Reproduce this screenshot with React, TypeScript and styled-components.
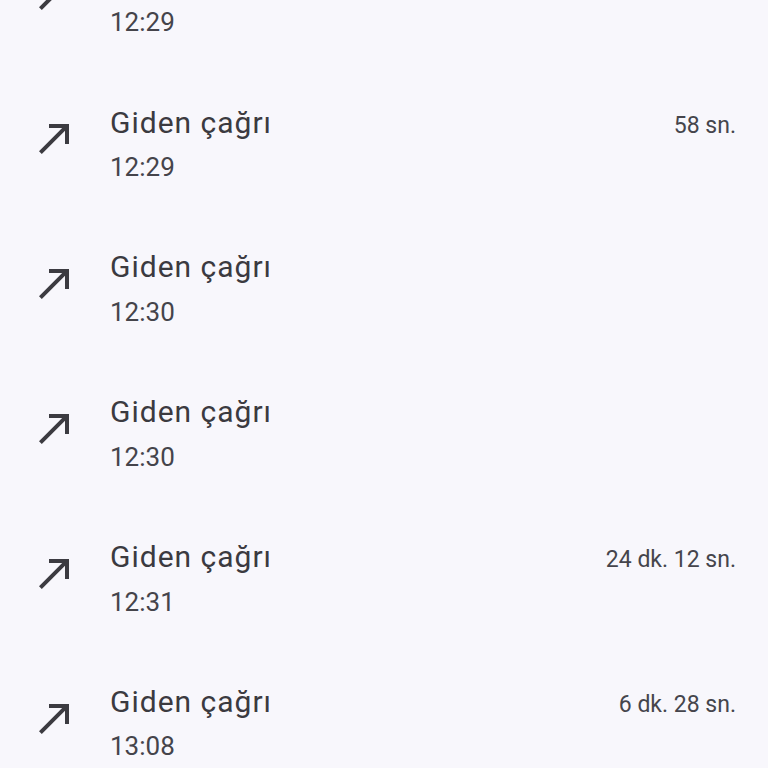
import React from "react";
import styled, { createGlobalStyle } from "styled-components";

const Global = createGlobalStyle`
  html, body { margin: 0; padding: 0; background: #f8f7fc; }
  body { font-family: Roboto, "Noto Sans", sans-serif; overflow: hidden; }
`;

const List = styled.div`
  display: flex;
  flex-direction: column;
  margin-top: -74px;
`;

const Row = styled.div`
  display: flex;
  align-items: center;
  height: 144.8px;
  padding: 0 32px 0 31px;
  box-sizing: border-box;
`;

const IconBox = styled.div`
  width: 48px;
  height: 48px;
  margin-right: 31px;
  margin-bottom: 9.6px;
  flex: none;
  color: #3c3b41;
`;

const Texts = styled.div`
  display: flex;
  flex-direction: column;
  flex: 1;
  margin-top: 4px;
`;

const TopLine = styled.div`
  display: flex;
  align-items: center;
  justify-content: space-between;
  height: 42px;
`;

const Title = styled.span`
  font-size: 30px;
  color: #3b3a40;
  letter-spacing: 1px;
`;

const Duration = styled.span`
  font-size: 23px;
  color: #45454c;
  padding-top: 6px;
`;

const Time = styled.div`
  font-size: 26px;
  line-height: 44px;
  margin-top: 2px;
  color: #45444b;
`;

const CallMade = () => (
  <svg width="48" height="48" viewBox="0 0 24 24" fill="currentColor">
    <path d="M9 5v2h6.59L4 18.59 5.41 20 17 8.41V15h2V5z" />
  </svg>
);

const calls = [
  { time: "12:29", dur: "" },
  { time: "12:29", dur: "58 sn." },
  { time: "12:30", dur: "" },
  { time: "12:30", dur: "" },
  { time: "12:31", dur: "24 dk. 12 sn." },
  { time: "13:08", dur: "6 dk. 28 sn." },
];

export default function App() {
  return (
    <>
      <Global />
      <List>
        {calls.map((c, i) => (
          <Row key={i}>
            <IconBox>
              <CallMade />
            </IconBox>
            <Texts>
              <TopLine>
                <Title>Giden çağrı</Title>
                {c.dur && <Duration>{c.dur}</Duration>}
              </TopLine>
              <Time>{c.time}</Time>
            </Texts>
          </Row>
        ))}
      </List>
    </>
  );
}
